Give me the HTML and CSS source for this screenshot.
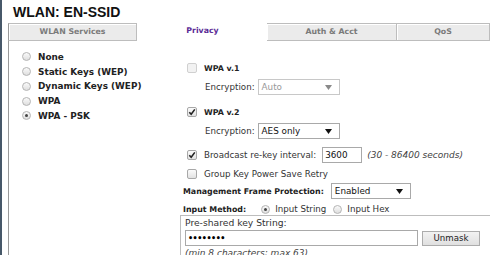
FILE: index.html
```html
<!DOCTYPE html>
<html>
<head>
<meta charset="utf-8">
<link rel="stylesheet" href="styles.css">
</head>
<body>
<div class="edge"></div>
<div class="main">
  <h1 class="title">WLAN: EN-SSID</h1>
  <div class="tabs">
    <div class="tab t1">WLAN Services</div>
    <div class="tab active">Privacy</div>
    <div class="tab">Auth &amp; Acct</div>
    <div class="tab last">QoS</div>
  </div>
  <div class="panel">
    <div class="leftcol">
      <div class="ritem"><span class="radio"></span><span>None</span></div>
      <div class="ritem"><span class="radio"></span><span>Static Keys (WEP)</span></div>
      <div class="ritem"><span class="radio"></span><span>Dynamic Keys (WEP)</span></div>
      <div class="ritem"><span class="radio"></span><span>WPA</span></div>
      <div class="ritem"><span class="radio on"></span><span>WPA - PSK</span></div>
    </div>
    <div class="rightcol">
      <div class="row r1 ind"><span class="cb dis"></span><span class="blab">WPA v.1</span></div>
      <div class="row r2 sub"><span class="lab">Encryption:</span><span class="sel dis w82"><span>Auto</span><svg width="7" height="5" viewBox="0 0 7 5"><polygon points="0,0 7,0 3.5,5" fill="#8a8a8a"/></svg></span></div>
      <div class="row r3 ind"><span class="cb"><svg width="10" height="10" viewBox="0 0 10 10"><path d="M2.3 5.2 L4.2 7.3 L7.8 2.4" stroke="#222" stroke-width="1.6" fill="none"/></svg></span><span class="blab">WPA v.2</span></div>
      <div class="row r4 sub"><span class="lab">Encryption:</span><span class="sel w82"><span>AES only</span><svg width="7" height="5" viewBox="0 0 7 5"><polygon points="0,0 7,0 3.5,5" fill="#111"/></svg></span></div>
      <div class="row r5 ind"><span class="cb"><svg width="10" height="10" viewBox="0 0 10 10"><path d="M2.3 5.2 L4.2 7.3 L7.8 2.4" stroke="#222" stroke-width="1.6" fill="none"/></svg></span><span class="lab">Broadcast re-key interval:</span><span class="txt w40">3600</span><span class="hint">(30 - 86400 seconds)</span></div>
      <div class="row r6 ind"><span class="cb"></span><span class="lab">Group Key Power Save Retry</span></div>
      <div class="row r7"><span class="blab">Management Frame Protection:</span><span class="sel w80 mfp"><span>Enabled</span><svg width="7" height="5" viewBox="0 0 7 5"><polygon points="0,0 7,0 3.5,5" fill="#111"/></svg></span></div>
      <div class="row r8"><span class="blab im">Input Method:</span><span class="radio on sm"></span><span class="lab">Input String</span><span class="radio sm hx"></span><span class="lab">Input Hex</span></div>
      <div class="box">
        <div class="prow">Pre-shared key String:</div>
        <div class="irow"><span class="txt psk">••••••••</span><span class="btn">Unmask</span></div>
        <div class="hint2">(min 8 characters; max 63)</div>
      </div>
    </div>
  </div>
</div>
</body>
</html>
```
FILE: styles.css
```css
html, body { margin: 0; padding: 0; background: #fff; }
body {
  display: flex;
  height: 255px;
  overflow: hidden;
  font-family: "DejaVu Sans", Verdana, sans-serif;
  color: #222;
}
.edge { width: 2px; background: #475869; flex: none; }
.main { flex: 1; padding-left: 6px; display: flex; flex-direction: column; min-width: 0; overflow: hidden; }
.title {
  flex: none;
  margin: 0;
  padding: 4px 0 0 5px;
  height: 23px;
  box-sizing: border-box;
  font-family: "Liberation Sans", Arial, sans-serif;
  font-size: 14px;
  font-weight: bold;
  color: #111;
  line-height: 16px;
}
.tabs { display: flex; height: 18px; flex: none; }
.tab {
  width: 130px;
  flex: none;
  box-sizing: border-box;
  background: #ebebeb;
  border: 1px solid #bdbdbd;
  border-left: none;
  box-shadow: inset 1px 1px 0 #fff;
  text-align: center;
  font-weight: bold;
  font-size: 7.8px;
  line-height: 16px;
  color: #7a7a7a;
}
.tab.t1 { width: 129px; border-left: 1px solid #9a9a9a; }
.tab.active { background: #fff; border: none; box-shadow: none; color: #5a2b96; border-left: 1px solid #fff; }
.tab.last { flex: 1; width: auto; }
.panel { flex: 1 1 0; min-height: 0; display: flex; border-left: 1px solid #9a9a9a; }
.leftcol { width: 171px; flex: none; padding-top: 8.6px; }
.ritem {
  display: flex; align-items: center;
  height: 14.75px;
  padding-left: 13px;
  font-weight: bold;
  font-size: 8.9px;
  color: #222;
}
.radio {
  width: 9px; height: 9px;
  box-sizing: border-box;
  border-radius: 50%;
  border: 1px solid #b4b4b4;
  background: linear-gradient(#fafafa, #dedede);
  margin-right: 7px;
  flex: none;
  position: relative;
}
.radio.on::after {
  content: "";
  position: absolute;
  left: 2px; top: 2px;
  width: 3px; height: 3px;
  border-radius: 50%;
  background: #444;
}
.rightcol { flex: 1; padding-top: 19px; display: flex; flex-direction: column; min-width: 0; }
.row { flex: none; display: flex; align-items: center; height: 16px; padding-left: 3px; font-size: 8.7px; color: #333; white-space: nowrap; }
.row.ind { padding-left: 7px; }
.row.sub { padding-left: 25px; }
.r2 { margin-top: 3px; }
.r3 { margin-top: 9px; }
.r4 { margin-top: 3px; }
.r5 { margin-top: 8px; }
.r6 { margin-top: 3px; }
.r7 { margin-top: 1px; }
.r8 { margin-top: 4px; height: 12px; }
.cb {
  width: 10px; height: 10px;
  box-sizing: border-box;
  border: 1px solid #a8a8a8;
  border-radius: 2px;
  background: linear-gradient(#fbfbfb, #e2e2e2);
  margin-right: 7px;
  flex: none;
  display: flex; align-items: center; justify-content: center;
}
.cb svg { margin: -1px; }
.cb.dis { border-color: #d0d0d0; background: #f2f2f2; }
.blab { font-weight: bold; font-size: 7.9px; color: #222; }
.lab { color: #333; }
.sel {
  display: flex; align-items: center; justify-content: space-between;
  height: 16px;
  box-sizing: border-box;
  border: 1px solid #a9a9a9;
  background: #fff;
  padding: 0 7px 0 3px;
  margin-left: 3px;
  font-size: 8.8px;
  color: #111;
}
.sel.dis { color: #999; border-color: #c8c8c8; }
.w82 { width: 82px; }
.w80 { width: 80px; }
.mfp { margin-left: 7px; }
.txt {
  display: flex; align-items: center;
  height: 16px;
  box-sizing: border-box;
  border: 1px solid #a9a9a9;
  background: #fff;
  padding-left: 2px;
  font-size: 8.8px;
  color: #111;
}
.w40 { width: 40px; margin-left: 6px; }
.hint { font-style: italic; margin-left: 5px; font-size: 9px; color: #444; }
.im { margin-right: 15px; }
.radio.sm { margin-right: 5px; }
.radio.sm.hx { margin-left: 7px; }
.box {
  flex: none;
  border-top: 1px solid #bdbdbd;
  border-left: 1px solid #bdbdbd;
  padding-left: 4px;
  height: 60px;
  font-size: 8.8px;
  color: #333;
}
.prow { height: 14px; line-height: 14px; font-size: 9.2px; }
.irow { display: flex; align-items: center; height: 16px; }
.psk { width: 233px; flex: none; font-weight: bold; font-size: 8px; letter-spacing: -0.5px; color: #000; }
.btn {
  width: 58px; height: 15px;
  flex: none;
  box-sizing: border-box;
  margin-left: 4px;
  border: 1px solid #acacac;
  background: linear-gradient(#f2f2f2, #e0e0e0);
  display: flex; align-items: center; justify-content: center;
  font-size: 8.6px;
  color: #222;
}
.hint2 { font-style: italic; font-size: 9px; color: #444; line-height: 12px; margin-top: 1px; white-space: nowrap; }
```
